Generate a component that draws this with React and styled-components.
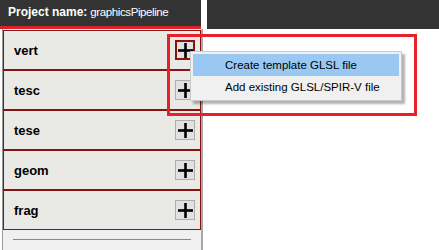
import styled, { createGlobalStyle } from "styled-components";

const GlobalStyle = createGlobalStyle`
  body {
    margin: 0;
    background: #ffffff;
    font-family: "Liberation Sans", Arial, sans-serif;
  }
`;

const stages = ["vert", "tesc", "tese", "geom", "frag"];

const Page = styled.div`
  position: relative;
  width: 439px;
  height: 250px;
  overflow: hidden;
  display: flex;
  align-items: flex-start;
`;

const LeftColumn = styled.div`
  width: 203px;
  height: 250px;
  display: flex;
  flex-direction: column;
`;

const Header = styled.div`
  width: 201px;
  height: 29px;
  box-sizing: border-box;
  background: #333333;
  border-bottom: 3px solid #d8232a;
  display: flex;
  align-items: center;
  padding: 0 0 2px 8px;
  color: #ffffff;
  font-size: 12px;
  white-space: nowrap;
`;

const HeaderLabel = styled.b`
  font-weight: bold;
  margin-right: 3px;
`;

const HeaderValue = styled.span`
  font-size: 11.5px;
  letter-spacing: -0.4px;
`;

const TopBar = styled.div`
  flex: 1;
  margin-left: 4px;
  height: 29px;
  background: #333333;
`;

const Panel = styled.div`
  flex: 1;
  margin-left: 2px;
  background: #f0f0f0;
  border-left: 1px solid #9a9a9a;
  border-right: 2px solid #a8a8a8;
  padding-top: 1px;
  display: flex;
  flex-direction: column;
`;

const Stage = styled.div`
  height: 40px;
  box-sizing: border-box;
  border: 1px solid #8b1212;
  background: #e9e9e5;
  display: flex;
  align-items: center;
  justify-content: space-between;
  padding: 0 5px 0 10px;
`;

const StageName = styled.span`
  font-weight: bold;
  font-size: 13px;
  color: #000000;
`;

const AddButton = styled.div`
  width: 20px;
  height: 20px;
  box-sizing: border-box;
  border: ${(p) => (p.$active ? "2px solid #8b1212" : "1px solid #adadad")};
  background: #e1e1e1;
  display: flex;
  align-items: center;
  justify-content: center;
`;

const Separator = styled.div`
  margin: 9px 10px 0 10px;
  height: 1px;
  background: #8a8a8a;
`;

const Menu = styled.div`
  position: absolute;
  left: 190px;
  top: 51px;
  width: 212px;
  box-sizing: border-box;
  padding: 2px;
  background: #f0f0f0;
  border: 1px solid #cccccc;
  box-shadow: 3px 3px 2px rgba(0, 0, 0, 0.3);
`;

const MenuItem = styled.div`
  height: 22px;
  display: flex;
  align-items: center;
  padding-left: 32px;
  font-size: 11.5px;
  color: #000000;
  background: ${(p) => (p.$hover ? "#99c9f3" : "transparent")};
`;

const Highlight = styled.div`
  position: absolute;
  left: 167px;
  top: 34px;
  width: 250px;
  height: 82px;
  box-sizing: border-box;
  border: 3px solid #e8202a;
  pointer-events: none;
`;

const Plus = () => (
  <svg width="15" height="15" viewBox="0 0 15 15">
    <rect x="0" y="6.2" width="15" height="2.6" fill="#000" />
    <rect x="6.2" y="0" width="2.6" height="15" fill="#000" />
  </svg>
);

const App = () => {
  return (
    <Page>
      <GlobalStyle />
      <LeftColumn>
        <Header>
          <HeaderLabel>Project name:</HeaderLabel>
          <HeaderValue>graphicsPipeline</HeaderValue>
        </Header>
        <Panel>
          {stages.map((s, i) => (
            <Stage key={s}>
              <StageName>{s}</StageName>
              <AddButton $active={i === 0}>
                <Plus />
              </AddButton>
            </Stage>
          ))}
          <Separator />
        </Panel>
      </LeftColumn>
      <TopBar />
      <Highlight />
      <Menu>
        <MenuItem $hover>Create template GLSL file</MenuItem>
        <MenuItem>Add existing GLSL/SPIR-V file</MenuItem>
      </Menu>
    </Page>
  );
};

export default App;
